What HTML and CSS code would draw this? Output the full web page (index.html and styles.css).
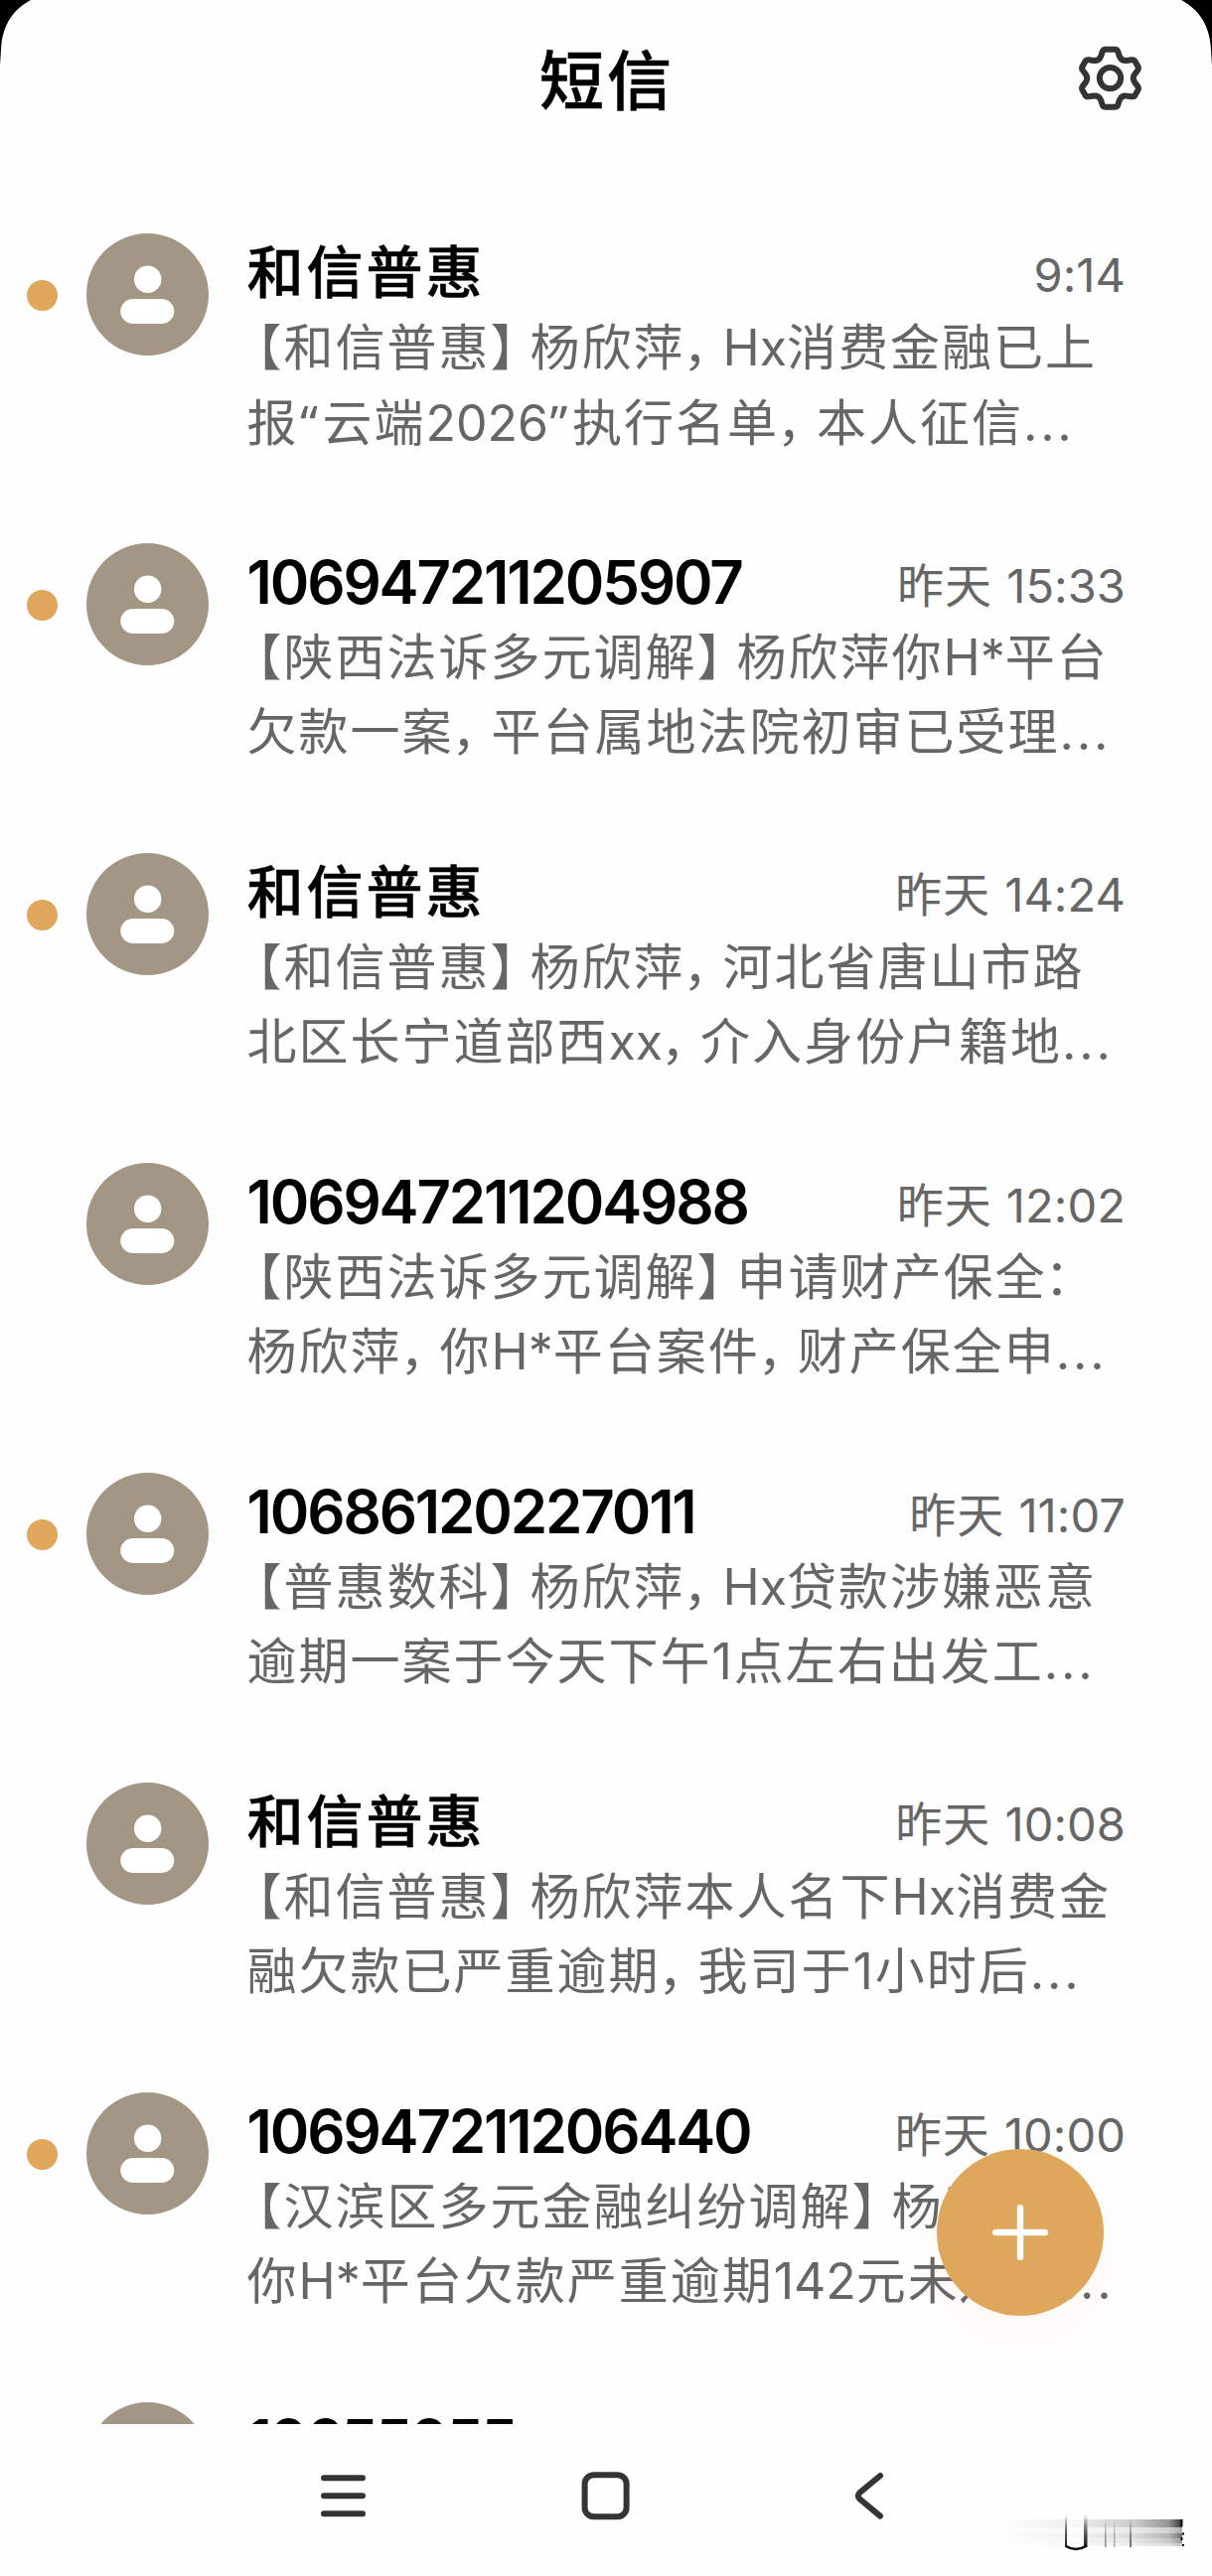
FILE: index.html
```html
<!DOCTYPE html>
<html lang="zh-CN">
<head>
<meta charset="utf-8">
<title>短信</title>
<link rel="stylesheet" href="styles.css">
</head>
<body>
<svg class="defs" width="0" height="0" aria-hidden="true">
  <symbol id="person" viewBox="0 0 123 123">
    <circle cx="61.5" cy="61.5" r="61.5" fill="#a39684"/>
    <circle cx="61.7" cy="46.3" r="13.7" fill="#fff"/>
    <rect x="34.3" y="66" width="54" height="25" rx="12.5" fill="#fff"/>
  </symbol>
</svg>
<div class="screen">
  <svg class="corner corner-left" viewBox="0 0 32 68"><path d="M0 0H31C14 9 3 24 1.2 47L0 66Z"/></svg>
  <svg class="corner corner-right" viewBox="0 0 32 68"><path d="M0 0H31C14 9 3 24 1.2 47L0 66Z"/></svg>

  <header class="header">
    <h1>短信</h1>
    <svg class="gear" viewBox="25 26 65 66" fill="none" stroke="#343434" stroke-width="6" stroke-linejoin="round">
      <path d="M53 29.8H62Q64.5 29.8 65.3 32L67 37Q69 41.5 74 41L79 40.3Q81.5 40 82.7 42L85.5 47Q86.5 49 85 51L82 55Q79.5 58.8 82 62.6L85 66.6Q86.5 68.6 85.5 70.6L82.7 75.6Q81.5 77.6 79 77.3L74 76.6Q69 76 67 80.6L65.3 85.5Q64.5 87.8 62 87.8H53Q50.5 87.8 49.7 85.5L48 80.6Q46 76 41 76.6L36 77.3Q33.5 77.6 32.3 75.6L29.5 70.6Q28.5 68.6 30 66.6L33 62.6Q35.5 58.8 33 55L30 51Q28.5 49 29.5 47L32.3 42Q33.5 40 36 40.3L41 41Q46 41.5 48 37L49.7 32Q50.5 29.8 53 29.8Z"/>
      <circle cx="57.5" cy="58.6" r="10.7"/>
    </svg>
  </header>

  <main class="list">
    <article class="row">
      <i class="dot unread"></i><svg class="avatar"><use href="#person"/></svg>
      <div class="body">
        <div class="top"><h2>和信普惠</h2><time><span>9:14</span></time></div>
        <p><span class="open">【</span>和信普惠<span class="close">】</span>杨欣萍<span class="comma">，</span><span class="lat">Hx</span>消费金融已上</p>
        <p>报<span class="quote">“</span>云端<span class="lat">2026</span><span class="quote">”</span>执行名单<span class="comma">，</span>本人征信<span class="more">...</span></p>
      </div>
    </article>
    <article class="row">
      <i class="dot unread"></i><svg class="avatar"><use href="#person"/></svg>
      <div class="body">
        <div class="top"><h2 class="num">106947211205907</h2><time>昨天 <span>15:33</span></time></div>
        <p><span class="open">【</span>陕西法诉多元调解<span class="close">】</span>杨欣萍你<span class="lat">H*</span>平台</p>
        <p>欠款一案<span class="comma">，</span>平台属地法院初审已受理<span class="more">...</span></p>
      </div>
    </article>
    <article class="row">
      <i class="dot unread"></i><svg class="avatar"><use href="#person"/></svg>
      <div class="body">
        <div class="top"><h2>和信普惠</h2><time>昨天 <span>14:24</span></time></div>
        <p><span class="open">【</span>和信普惠<span class="close">】</span>杨欣萍<span class="comma">，</span>河北省唐山市路</p>
        <p>北区长宁道部西<span class="lat">xx</span><span class="comma">，</span>介入身份户籍地<span class="more">...</span></p>
      </div>
    </article>
    <article class="row">
      <i class="dot"></i><svg class="avatar"><use href="#person"/></svg>
      <div class="body">
        <div class="top"><h2 class="num">106947211204988</h2><time>昨天 <span>12:02</span></time></div>
        <p><span class="open">【</span>陕西法诉多元调解<span class="close">】</span>申请财产保全<span class="comma">：</span></p>
        <p>杨欣萍<span class="comma">，</span>你<span class="lat">H*</span>平台案件<span class="comma">，</span>财产保全申<span class="more">...</span></p>
      </div>
    </article>
    <article class="row">
      <i class="dot unread"></i><svg class="avatar"><use href="#person"/></svg>
      <div class="body">
        <div class="top"><h2 class="num">10686120227011</h2><time>昨天 <span>11:07</span></time></div>
        <p><span class="open">【</span>普惠数科<span class="close">】</span>杨欣萍<span class="comma">，</span><span class="lat">Hx</span>贷款涉嫌恶意</p>
        <p>逾期一案于今天下午<span class="one">1</span>点左右出发工<span class="more">...</span></p>
      </div>
    </article>
    <article class="row">
      <i class="dot"></i><svg class="avatar"><use href="#person"/></svg>
      <div class="body">
        <div class="top"><h2>和信普惠</h2><time>昨天 <span>10:08</span></time></div>
        <p><span class="open">【</span>和信普惠<span class="close">】</span>杨欣萍本人名下<span class="lat">Hx</span>消费金</p>
        <p>融欠款已严重逾期<span class="comma">，</span>我司于<span class="one">1</span>小时后<span class="more">...</span></p>
      </div>
    </article>
    <article class="row">
      <i class="dot unread"></i><svg class="avatar"><use href="#person"/></svg>
      <div class="body">
        <div class="top"><h2 class="num">106947211206440</h2><time>昨天 <span>10:00</span></time></div>
        <p><span class="open">【</span>汉滨区多元金融纠纷调解<span class="close">】</span>杨欣萍</p>
        <p>你<span class="lat">H*</span>平台欠款严重逾期<span class="lat">142</span>元未还清<span class="more">...</span></p>
      </div>
    </article>
    <article class="row">
      <i class="dot"></i><svg class="avatar"><use href="#person"/></svg>
      <div class="body">
        <div class="top"><h2 class="num last">10655055</h2></div>
      </div>
    </article>
  </main>

  <button class="fab" aria-label="新建">
    <svg viewBox="0 0 56 56" stroke="#fff" stroke-width="6.4" stroke-linecap="round"><path d="M28 3.2V52.8M3.2 28H52.8"/></svg>
  </button>

  <nav class="nav">
    <svg viewBox="0 0 56 56"><path d="M8 10.3H47M8 28.3H47M8 46.3H47"/></svg>
    <svg viewBox="0 0 56 56"><rect x="6.6" y="7.2" width="42" height="42" rx="9"/></svg>
    <svg viewBox="0 0 56 56"><path d="M40 8L19.5 25Q16 28.3 19.5 31.6L40 48.6"/></svg>
  </nav>

  <svg class="smear" viewBox="0 0 200 44">
    <defs>
      <linearGradient id="fade"><stop offset="0" stop-color="#000" stop-opacity="0"/><stop offset=".45" stop-color="#000" stop-opacity=".07"/><stop offset=".75" stop-color="#000" stop-opacity=".2"/><stop offset=".93" stop-color="#000" stop-opacity=".42"/><stop offset="1" stop-color="#000" stop-opacity=".8"/></linearGradient>
      <linearGradient id="drop" x2="0" y2="1"><stop offset="0" stop-opacity="0"/><stop offset=".5" stop-opacity=".6"/><stop offset="1" stop-opacity=".9"/></linearGradient>
    </defs>
    <g fill="url(#fade)">
      <rect x="0" y="7" width="190" height="8"/><rect x="0" y="15" width="190" height="6" opacity=".4"/>
      <rect x="0" y="21" width="190" height="5" opacity=".7"/><rect x="0" y="26" width="190" height="5" opacity=".5"/>
      <rect x="0" y="31" width="190" height="3" opacity=".3"/>
    </g>
    <path d="M189.5 7V14M190 21.5H192M189.5 25V28M190 33H192" stroke="#000" stroke-width="2"/>
    <rect x="75" y="6" width="16" height="28" fill="#fff" opacity=".6"/>
    <g fill="url(#drop)">
      <rect x="72" y="2" width="2" height="33"/><rect x="91" y="2" width="3.5" height="33"/>
      <rect x="112" y="6" width="1.5" height="29" opacity=".5"/><rect x="121" y="6" width="1.5" height="29" opacity=".35"/><rect x="137" y="6" width="2" height="29" opacity=".6"/>
    </g>
    <path d="M73 34Q83 40 93 34" fill="none" stroke="#000" stroke-width="2.5"/>
  </svg>
</div>
</body>
</html>
```
FILE: styles.css
```css
* { box-sizing: border-box; margin: 0; padding: 0; }
body {
  background: #fff;
  font-family: Inter, "Noto Sans CJK SC", sans-serif;
  color: #000;
}
.defs { display: block; }
.screen {
  position: relative;
  width: 1220px;
  height: 2594px;
  overflow: hidden;
  display: flex;
  flex-direction: column;
  background: #fefefe;
}
.corner { position: absolute; top: 0; width: 32px; height: 68px; }
.corner-left { left: 0; }
.corner-right { right: 0; transform: scaleX(-1); }

.header {
  flex: none;
  height: 195px;
  padding: 47px 70px 0;
  display: grid;
  grid-template-columns: 1fr auto 1fr;
  align-items: start;
}
h1 {
  grid-column: 2;
  font-size: 65px;
  font-weight: 500;
  line-height: 70px;
  letter-spacing: 3px;
  margin-right: -2px;
  -webkit-text-stroke: .6px #000;
}
.gear { justify-self: end; width: 65px; height: 66px; margin-top: -1px; }

.list { flex: none; height: 2246px; overflow: hidden; }
.row {
  height: 312px;
  padding: 40px 88px 0 27px;
  display: flex;
}
.dot {
  flex: none;
  width: 31px;
  height: 31px;
  margin-top: 47px;
  border-radius: 50%;
}
.unread { background: #dfa75c; }
.avatar { flex: none; width: 123px; height: 123px; margin: 0 39px 0 28.5px; }
.body { flex: 1; min-width: 0; padding-top: 2.5px; }
.top {
  height: 75.3px;
  display: flex;
  justify-content: space-between;
  align-items: baseline;
}
h2 {
  font-size: 57px;
  font-weight: 500;
  line-height: 74px;
  letter-spacing: 3px;
  -webkit-text-stroke: .5px #000;
}
h2.num { font-size: 60px; font-weight: 600; line-height: 72px; letter-spacing: -2.15px; -webkit-text-stroke: 0; }
h2.last { letter-spacing: -3px; }
time {
  font-size: 47px;
  line-height: 60px;
  letter-spacing: 1px;
  color: #666;
  margin-right: -1px;
  position: relative;
  top: -1px;
  white-space: nowrap;
}
time span { letter-spacing: .1px; }
p {
  font-size: 50px;
  line-height: 75.6px;
  letter-spacing: 2px;
  color: #666;
  white-space: nowrap;
}
.open { margin-left: -15px; }
.close { margin-right: -12px; }
.comma { margin: 0 -12px 0 -2px; }
.quote { font-family: "Noto Sans", sans-serif; letter-spacing: 4.5px; padding-left: 1.5px; }
.lat { letter-spacing: 0; }
.one { letter-spacing: 2px; }
.more { letter-spacing: 2.8px; }

.fab {
  position: absolute;
  left: 943px;
  top: 2164px;
  width: 168px;
  height: 168px;
  border: 0;
  border-radius: 50%;
  background: #dfa75c;
  box-shadow: 0 22px 50px rgba(223, 130, 80, .06);
  display: grid;
  place-items: center;
}
.fab svg { width: 56px; height: 56px; }

.nav {
  flex: 1;
  padding: 44px 318px 0;
  display: flex;
  justify-content: space-between;
}
.nav svg {
  width: 56px;
  height: 56px;
  fill: none;
  stroke: #343434;
  stroke-width: 6;
  stroke-linecap: round;
}
.smear { position: absolute; left: 1000px; top: 2530px; width: 200px; height: 44px; }
```
